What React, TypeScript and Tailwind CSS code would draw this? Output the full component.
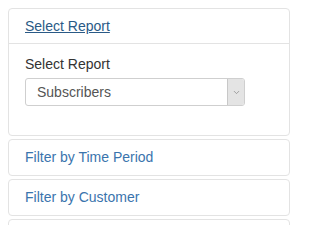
import { ChevronDown } from "lucide-react";

const FILTERS = ["Filter by Time Period", "Filter by Customer", ""];

export default function App() {
  return (
    <div className="h-[225px] w-[300px] overflow-hidden bg-white pl-2 pr-[10px] pt-2 font-['Liberation_Sans',Arial,sans-serif] text-[14px]">
      {/* Report panel */}
      <div className="rounded-[4px] border border-[#e3e3e3]">
        <div className="flex h-[35px] items-center border-b border-[#e3e3e3] px-4">
          <a className="text-[#2a5a86] underline">Select Report</a>
        </div>
        <div className="px-4 pb-[29px] pt-[10px]">
          <div className="h-[20px] leading-[20px] text-[#333]">Select Report</div>
          <div className="mt-[4px] flex h-[28px] w-[220px] overflow-hidden rounded-[3px] border border-[#cfcfcf]">
            <div className="flex flex-1 items-center pl-[11px] text-[#555]">Subscribers</div>
            <div className="flex w-[17px] items-center justify-center border-l border-[#c8c8c8] bg-[#e4e4e4]">
              <ChevronDown className="h-[9px] w-[9px] text-[#888]" strokeWidth={2} />
            </div>
          </div>
        </div>
      </div>

      {/* Collapsed filter panels */}
      {FILTERS.map((f, i) => (
        <div key={i} className="mt-[3px] rounded-[4px] border border-[#e3e3e3]">
          <div className="flex h-[35px] items-center px-4 text-[#3a74ad]">{f}</div>
        </div>
      ))}
    </div>
  );
}
